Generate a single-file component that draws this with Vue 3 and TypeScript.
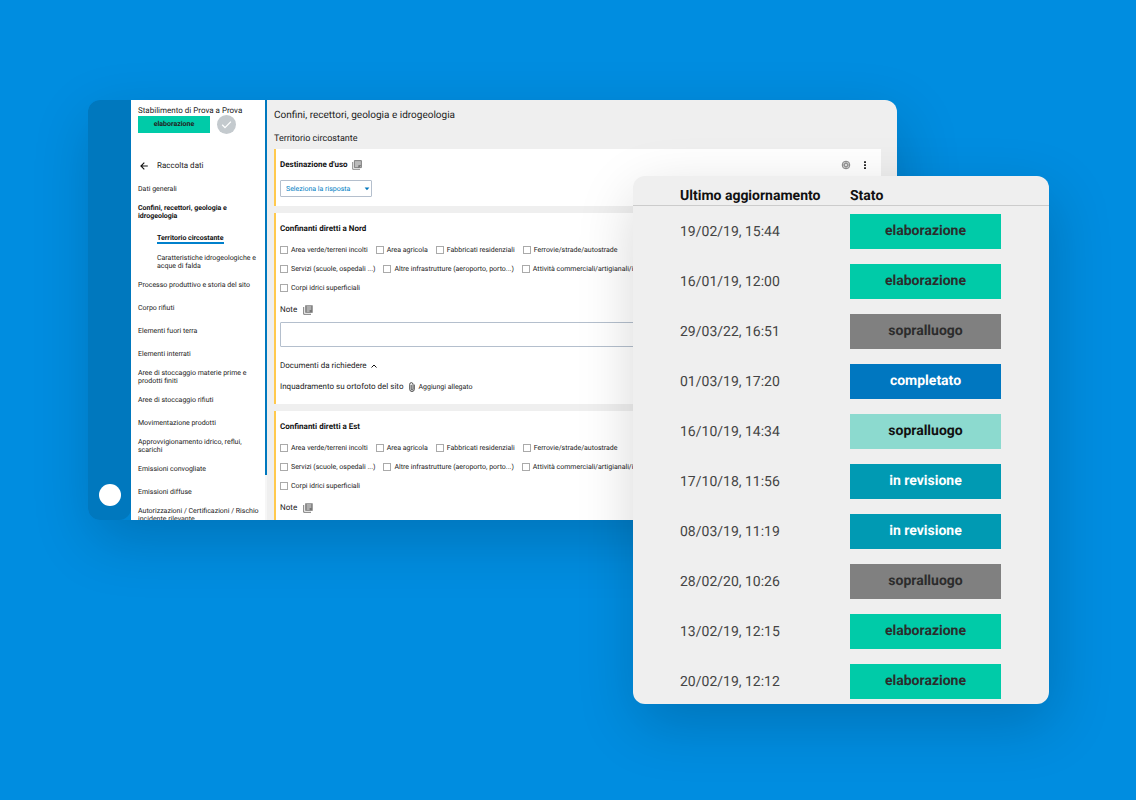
<script setup lang="ts">
import { ref } from 'vue'

interface MenuItem {
  label: string
  active?: boolean
  children?: { label: string; active?: boolean }[]
}

const menu: MenuItem[] = [
  { label: 'Dati generali' },
  {
    label: 'Confini, recettori, geologia e idrogeologia',
    active: true,
    children: [
      { label: 'Territorio circostante', active: true },
      { label: 'Caratteristiche idrogeologiche e acque di falda' },
    ],
  },
  { label: 'Processo produttivo e storia del sito' },
  { label: 'Corpo rifiuti' },
  { label: 'Elementi fuori terra' },
  { label: 'Elementi interrati' },
  { label: 'Aree di stoccaggio materie prime e prodotti finiti' },
  { label: 'Aree di stoccaggio rifiuti' },
  { label: 'Movimentazione prodotti' },
  { label: 'Approvvigionamento idrico, reflui, scarichi' },
  { label: 'Emissioni convogliate' },
  { label: 'Emissioni diffuse' },
  { label: 'Autorizzazioni / Certificazioni / Rischio incidente rilevante' },
]

const optionRows: string[][] = [
  ['Area verde/terreni incolti', 'Area agricola', 'Fabbricati residenziali', 'Ferrovie/strade/autostrade'],
  ['Servizi (scuole, ospedali ...)', 'Altre infrastrutture (aeroporto, porto...)', 'Attività commerciali/artigianali/industriali'],
  ['Corpi idrici superficiali'],
]

const sections = [
  { id: 'nord', title: 'Confinanti diretti a Nord', document: 'Inquadramento su ortofoto del sito' },
  { id: 'est', title: 'Confinanti diretti a Est', document: '' },
]

const notes = ref<Record<string, string>>({ nord: '', est: '' })

const updates = [
  { date: '19/02/19, 15:44', state: 'elaborazione', tone: 'green' },
  { date: '16/01/19, 12:00', state: 'elaborazione', tone: 'green' },
  { date: '29/03/22, 16:51', state: 'sopralluogo', tone: 'gray' },
  { date: '01/03/19, 17:20', state: 'completato', tone: 'blue' },
  { date: '16/10/19, 14:34', state: 'sopralluogo', tone: 'mint' },
  { date: '17/10/18, 11:56', state: 'in revisione', tone: 'teal' },
  { date: '08/03/19, 11:19', state: 'in revisione', tone: 'teal' },
  { date: '28/02/20, 10:26', state: 'sopralluogo', tone: 'gray' },
  { date: '13/02/19, 12:15', state: 'elaborazione', tone: 'green' },
  { date: '20/02/19, 12:12', state: 'elaborazione', tone: 'green' },
]
</script>

<template>
  <div class="stage">
    <div class="window">
      <div class="rail">
        <button class="rail-button" type="button" aria-label="Profilo"></button>
      </div>

      <aside class="sidebar">
        <div class="plant">
          <div class="plant-name">Stabilimento di Prova a Prova</div>
          <div class="plant-state">
            <span class="badge">elaborazione</span>
            <button class="confirm" type="button" aria-label="Conferma">
              <svg viewBox="0 0 19 19"><path d="M5.2 9.8l2.8 2.8 5.9-6" fill="none" stroke="#fff" stroke-width="1.3" /></svg>
            </button>
          </div>
        </div>

        <a class="back" href="#">
          <svg viewBox="0 0 8 8"><path d="M7.8 4H1M4.3 .6L.9 4l3.4 3.4" fill="none" stroke="#111" stroke-width="1.1" /></svg>
          <span>Raccolta dati</span>
        </a>

        <nav>
          <ul class="menu">
            <li v-for="item in menu" :key="item.label">
              <a class="menu-link" :class="{ strong: item.active }" href="#">{{ item.label }}</a>
              <ul v-if="item.children" class="submenu">
                <li v-for="child in item.children" :key="child.label">
                  <a class="menu-link" href="#"><span :class="{ current: child.active }">{{ child.label }}</span></a>
                </li>
              </ul>
            </li>
          </ul>
        </nav>
      </aside>
      <div class="scroll"><div class="thumb"></div></div>

      <main class="content">
        <h1>Confini, recettori, geologia e idrogeologia</h1>
        <h2>Territorio circostante</h2>

        <section class="card usage">
          <div class="card-head">
            <h3><label for="usage">Destinazione d'uso</label></h3>
            <svg class="note-icon" viewBox="0 0 10 10">
              <path d="M.7 2v7.3H8" fill="none" stroke="#888" />
              <path d="M2.4.6h7v7h-7z" fill="#bbb" stroke="#777" stroke-width=".9" />
              <path d="M6.4 7.8V5.2h3z" fill="#666" />
            </svg>
            <div class="tools">
              <button type="button" aria-label="Dettagli">
                <svg class="tool-icon" viewBox="0 0 10 10">
                  <circle cx="5" cy="5" r="3.8" fill="#ddd" stroke="#888" />
                  <path d="M3.4 3.4h3.2v3.2H3.4zM5 1v3M5 6v3M1 5h3M6 5h3" fill="none" stroke="#888" stroke-width=".8" />
                </svg>
              </button>
              <button type="button" aria-label="Altre azioni">
                <svg class="tool-icon" viewBox="0 0 10 10">
                  <path d="M4.1 1.2h1.8V3H4.1zM4.1 4.2h1.8V6H4.1zM4.1 7.2h1.8V9H4.1z" fill="#111" />
                </svg>
              </button>
            </div>
          </div>
          <div class="select">
            <select id="usage">
              <option>Seleziona la risposta</option>
            </select>
            <svg viewBox="0 0 6 4"><path d="M.6.4h4.8L3 3.2z" fill="#0077bd" /></svg>
          </div>
        </section>

        <section v-for="section in sections" :key="section.id" class="card">
          <h3>{{ section.title }}</h3>
          <div class="options">
            <div v-for="(row, r) in optionRows" :key="r" class="option-row">
              <label v-for="option in row" :key="option"><input type="checkbox" />{{ option }}</label>
            </div>
          </div>
          <div class="note-head">
            <label :for="'note-' + section.id">Note</label>
            <svg class="note-icon" viewBox="0 0 10 10">
              <path d="M.7 2v7.3H8" fill="none" stroke="#777" />
              <path d="M2.2.3h7.5v7.5H2.2z" fill="#777" />
              <path d="M3.6 2h4.7M3.6 4h4.7M3.6 6h3" stroke="#fff" stroke-width=".8" />
            </svg>
          </div>
          <textarea :id="'note-' + section.id" v-model="notes[section.id]"></textarea>
          <template v-if="section.document">
            <button class="docs" type="button">
              Documenti da richiedere
              <svg viewBox="0 0 6 4"><path d="M.5 3.5L3 1l2.5 2.5" fill="none" stroke="#111" /></svg>
            </button>
            <div class="attachment">
              <span>{{ section.document }}</span>
              <button type="button">
                <svg viewBox="0 0 6 10">
                  <path d="M5.3 2.6v4.6a2.3 2.3 0 0 1-4.6 0V2.3a1.6 1.6 0 0 1 3.3 0v4.8a.9.9 0 0 1-1.8 0V2.8" fill="none" stroke="#222" stroke-width=".8" />
                </svg>
                Aggiungi allegato
              </button>
            </div>
          </template>
        </section>
      </main>
    </div>

    <div class="updates">
      <table>
        <thead>
          <tr>
            <th scope="col">Ultimo aggiornamento</th>
            <th scope="col">Stato</th>
          </tr>
        </thead>
        <tbody>
          <tr v-for="update in updates" :key="update.date">
            <td>{{ update.date }}</td>
            <td><span class="state" :class="update.tone">{{ update.state }}</span></td>
          </tr>
        </tbody>
      </table>
    </div>
  </div>
</template>

<style>
body {
  margin: 0;
}
</style>

<style scoped>
.stage {
  position: relative;
  box-sizing: border-box;
  min-height: 100vh;
  padding: 100px 239px 96px 88px;
  overflow: hidden;
  background: #008de0;
  color: #222;
  font-family: Roboto, "Liberation Sans", sans-serif;
  font-size: 7px;
  line-height: 8px;
  text-rendering: geometricPrecision;
}

h1,
h2,
h3,
ul {
  margin: 0;
  padding: 0;
  font-weight: 400;
  list-style: none;
}

button,
select,
textarea {
  margin: 0;
  padding: 0;
  border: 0;
  background: none;
  color: inherit;
  font: inherit;
  text-rendering: inherit;
}

a {
  color: inherit;
  text-decoration: none;
}

svg {
  display: block;
  flex: none;
}

.window {
  display: flex;
  height: 420px;
  border-radius: 12px 12px 0 12px;
  overflow: hidden;
  background: #0086d5;
  box-shadow: 4px 20px 60px rgba(0, 0, 0, 0.18);
}

.rail {
  display: flex;
  flex: none;
  flex-direction: column;
  justify-content: flex-end;
  align-items: center;
  width: 43px;
  box-sizing: border-box;
  padding-bottom: 14px;
  border-radius: 12px 0 12px 12px;
  background: #0078be;
}

.rail-button {
  width: 22px;
  height: 22px;
  border-radius: 50%;
  background: #fff;
}

.sidebar {
  flex: none;
  box-sizing: border-box;
  width: 134px;
  padding: 5px 4px 0 7px;
  background: #fff;
}

.plant-name {
  font-size: 8px;
  line-height: 11px;
  white-space: nowrap;
}

.plant-state {
  display: flex;
  align-items: center;
  gap: 7px;
  height: 17px;
}

.badge {
  width: 72px;
  line-height: 17px;
  background: #00cba8;
  font-weight: 700;
  text-align: center;
}

.confirm {
  width: 19px;
  height: 19px;
  border-radius: 50%;
  background: #c4cace;
}

.back {
  display: flex;
  align-items: center;
  gap: 9px;
  height: 16px;
  margin: 25px 0 3px 2px;
  font-size: 8px;
}

.back svg {
  width: 8px;
  height: 8px;
}

.menu-link {
  display: flex;
  align-items: center;
  height: 23px;
}

.strong {
  color: #111;
  font-weight: 700;
}

.submenu {
  margin-left: 19px;
  padding-top: 4px;
}

.current {
  border-bottom: 2px solid #0080cc;
  color: #111;
  font-weight: 700;
}

.scroll {
  flex: none;
  width: 2px;
  background: #f6f6f6;
}

.thumb {
  height: 375px;
  background: #0078be;
}

.content {
  flex: 1;
  min-width: 0;
  padding: 9px 16px 0 7px;
  background: #efefef;
}

h1 {
  font-size: 10px;
  line-height: 14px;
}

h2 {
  margin: 10px 0 4px;
  font-size: 9px;
  line-height: 12px;
}

h3 {
  color: #111;
  font-size: 8px;
  font-weight: 700;
  line-height: 10px;
}

.card {
  margin-bottom: 7px;
  padding: 11px 16px 11px 4px;
  border-left: 2px solid #ffc94d;
  background: #fff;
}

.usage {
  padding: 9px 11px 9px 4px;
}

.card-head {
  display: flex;
  align-items: center;
  gap: 4px;
  height: 13px;
}

.note-icon {
  width: 10px;
  height: 10px;
}

.tools {
  display: flex;
  gap: 9px;
  margin-left: auto;
}

.tool-icon {
  width: 10px;
  height: 10px;
}

.select {
  display: grid;
  align-items: center;
  width: 92px;
  margin-top: 9px;
}

.select select,
.select svg {
  grid-area: 1 / 1;
}

.select select {
  height: 17px;
  padding: 0 5px;
  border: 1px solid #b4bfcd;
  border-radius: 1px;
  appearance: none;
  color: #0080c4;
}

.select svg {
  justify-self: end;
  width: 6px;
  height: 4px;
  margin-right: 2px;
  pointer-events: none;
}

.options {
  margin-top: 6px;
}

.option-row {
  display: flex;
  gap: 8px;
  height: 19px;
}

.option-row label {
  display: flex;
  flex: none;
  align-items: center;
  gap: 3px;
  white-space: nowrap;
}

.option-row input {
  width: 8px;
  height: 8px;
  margin: 0;
  border: 1px solid #aaa;
  appearance: none;
}

.option-row input:checked {
  background: #0078be;
}

.note-head {
  display: flex;
  align-items: center;
  gap: 6px;
  height: 12px;
  margin: 7px 0 6px;
  font-size: 8px;
}

textarea {
  display: block;
  box-sizing: border-box;
  width: 100%;
  height: 25px;
  border: 1px solid #b4bfcd;
  border-radius: 1px;
  resize: none;
}

.docs {
  display: flex;
  align-items: center;
  gap: 4px;
  height: 12px;
  margin-top: 13px;
  font-size: 8px;
}

.docs svg {
  width: 6px;
  height: 4px;
}

.attachment {
  display: flex;
  align-items: center;
  gap: 6px;
  height: 12px;
  margin-top: 9px;
  font-size: 8px;
}

.attachment button {
  display: flex;
  align-items: center;
  gap: 3px;
  font-size: 7px;
}

.attachment svg {
  width: 6px;
  height: 10px;
}

.updates {
  position: absolute;
  top: 176px;
  right: 87px;
  width: 416px;
  border-radius: 12px;
  overflow: hidden;
  background: #efefef;
  box-shadow: 4px 20px 60px rgba(0, 0, 0, 0.18);
}

table {
  width: 100%;
  border-collapse: collapse;
  font-size: 14px;
  line-height: 20px;
}

th,
td {
  padding: 8px 0 7px;
  text-align: left;
}

th {
  padding: 11px 0 0;
  border-bottom: 1px solid #ccc;
  color: #111;
  font-weight: 700;
  line-height: 18px;
}

th:first-child,
td:first-child {
  padding-left: 47px;
}

th:last-child,
td:last-child {
  width: 151px;
  padding-right: 48px;
}

tr:last-child td {
  padding-bottom: 5px;
}

td {
  color: #444;
}

.state {
  display: block;
  color: #2c2c2c;
  font-weight: 700;
  line-height: 35px;
  text-align: center;
}

.green {
  background: #00cba8;
}

.gray {
  background: #808080;
}

.blue {
  background: #0077c0;
  color: #fff;
}

.mint {
  background: #8cdacf;
  color: #111;
}

.teal {
  background: #009ab3;
  color: #fff;
}
</style>
